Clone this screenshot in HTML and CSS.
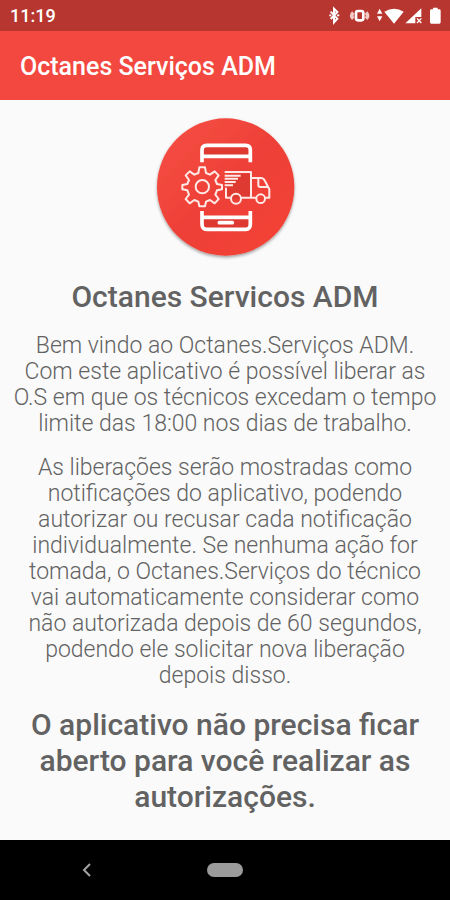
FILE: index.html
```html
<!DOCTYPE html>
<html lang="pt-BR">
<head>
<meta charset="utf-8">
<meta name="viewport" content="width=device-width, initial-scale=1">
<title>Octanes Serviços ADM</title>
<link rel="stylesheet" href="styles.css">
</head>
<body>
<div class="status">
  <time class="clock">11:19</time>
  <svg class="status-icons" viewBox="0 0 348 60" aria-hidden="true">
    <path d="M14 17 34 38 24 49V8L34 18 14 39" fill="none" stroke="#fff" stroke-width="6"/>
    <path d="M10 28h6M33 28h7" stroke="#fff" stroke-width="5"/>
    <rect x="90" y="15" width="22" height="28" rx="6" fill="none" stroke="#fff" stroke-width="8"/>
    <path d="M82 20q-10 9 0 18M120 20q10 9 0 18" fill="none" stroke="#f3c9c6" stroke-width="11"/>
    <path d="M153 23 161 8l8 15zM153 31h16l-8 15z" fill="#fff"/>
    <path d="M175 17q30-18 58 0L204 53z" fill="#fff"/>
    <path d="M238 52 286 7v26h-18v19z" fill="#fff"/>
    <path d="m273 37 13 14m0-14-13 14" stroke="#fff" stroke-width="4"/>
    <path d="M312 14q0-4 4-4h5V5h14v5h5q4 0 4 4v35q0 4-4 4h-24q-4 0-4-4z" fill="#fff"/>
  </svg>
</div>
<header class="app-bar">Octanes Serviços ADM</header>
<main class="content">
  <svg class="logo" viewBox="0 0 480 465" role="img" aria-label="Octanes">
    <defs>
      <linearGradient id="disc" x1="0" y1="0" x2="1" y2="1"><stop offset="0" stop-color="#f65045"/><stop offset=".5" stop-color="#ee4037"/><stop offset="1" stop-color="#f44336"/></linearGradient>
      <filter id="shadow" x="-10%" y="-10%" width="120%" height="125%"><feDropShadow dx="0" dy="5" stdDeviation="5" flood-color="#000" flood-opacity=".38"/></filter>
    </defs>
    <circle cx="242" cy="231" r="206" fill="url(#disc)" filter="url(#shadow)"/>
    <path d="M177 112h132v33H177zM246 192h74v74h-74zM177 325h132v30H177z" fill="#df3a31"/>
    <g fill="none" stroke="#fff">
      <path d="M171 157v-37q0-14 14-14h117q14 0 14 14v37M171 139h145M171 303v39q0 16 14 16h117q14 0 14-16v-39M171 322h145" stroke-width="11"/>
      <path d="M223 338h39" stroke-width="11" stroke-linecap="round"/>
      <g stroke-width="6" stroke="#ffe9e6" stroke-linejoin="round">
        <circle cx="172" cy="230" r="20"/>
        <path d="M163 172h17l3 17 12 5 14-10 12 12-10 14 5 12 15 3v13l-15 3-5 13 10 13-12 13-14-10-12 5-3 14h-17l-3-14-12-5-14 10-12-13 10-13-5-13-15-3v-13l15-3 5-12-10-14 12-12 14 10 12-5z"/>
        <path d="M239 186h79v77h-29M257 263h-14v-30M318 204h30q8 0 12 9l13 25v25h-12M334 263h-16M340 205v20q0 6 6 6h24M239 197h48M239 206h40M239 216h33M239 226h25"/>
        <circle cx="273" cy="266" r="15"/>
        <circle cx="347" cy="266" r="13"/>
      </g>
    </g>
  </svg>
  <h1>Octanes Servicos ADM</h1>
  <div class="message">
    <p>Bem vindo ao Octanes.Serviços ADM. Com este aplicativo é possível liberar as O.S em que os técnicos excedam o tempo limite das 18:00 nos dias de trabalho.</p>
    <p>As liberações serão mostradas como notificações do aplicativo, podendo autorizar ou recusar cada notificação individualmente. Se nenhuma ação for tomada, o Octanes.Serviços do técnico vai automaticamente considerar como não autorizada depois de 60 segundos, podendo ele solicitar nova liberação depois disso.</p>
    <h2>O aplicativo não precisa ficar aberto para você realizar as autorizações.</h2>
  </div>
</main>
<nav class="nav-bar">
  <button class="back" aria-label="Voltar"><svg viewBox="0 0 10 14"><path d="M8 1 2 7l6 6" fill="none" stroke="#a3a3a3" stroke-width="2"/></svg></button>
  <button class="home" aria-label="Início"></button>
</nav>
</body>
</html>
```
FILE: styles.css
```css
* { box-sizing: border-box; }

body {
  margin: 0;
  min-height: 100vh;
  display: flex;
  flex-direction: column;
  background: #fafafa;
  color: #626262;
  font-family: Roboto, "Liberation Sans", sans-serif;
}

.status {
  display: flex;
  align-items: center;
  justify-content: space-between;
  height: 31px;
  padding: 0 8px 0 10px;
  background: #b73730;
  color: #fff;
}

.clock {
  font-size: 18px;
  font-weight: 500;
  line-height: 24px;
}

.status-icons {
  width: 116px;
  height: 20px;
}

.app-bar {
  height: 69px;
  padding: 0 20px;
  background: #f34840;
  color: #fff;
  font-size: 25px;
  font-weight: 500;
  line-height: 72px;
}

.content {
  flex: 1;
  display: flex;
  flex-direction: column;
  align-items: center;
  gap: 14px;
  padding: 10px 13px 16px;
  text-align: center;
}

.logo {
  width: 160px;
  height: 155px;
}

h1, h2, p { margin: 0; }

h1, h2 {
  font-size: 30px;
  font-weight: 500;
  line-height: 36px;
}

.message {
  display: flex;
  flex-direction: column;
  gap: 18px;
  padding-top: 4px;
}

p {
  font-size: 23px;
  font-weight: 300;
  line-height: 26px;
}

.nav-bar {
  display: grid;
  grid-template-columns: 1fr auto 1fr;
  align-items: center;
  height: 60px;
  background: #000;
}

button {
  border: 0;
  padding: 0;
  background: none;
}

.back {
  justify-self: end;
  width: 40px;
  height: 40px;
  margin-right: 100px;
}

.back svg {
  display: block;
  width: 10px;
  height: 14px;
  margin: auto;
}

.home {
  width: 36px;
  height: 14px;
  border-radius: 7px;
  background: #9b9b9b;
}
```
